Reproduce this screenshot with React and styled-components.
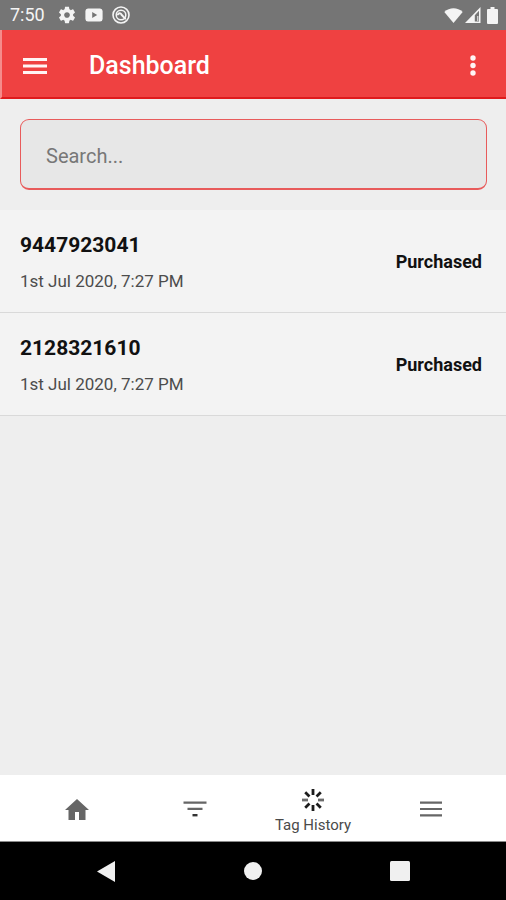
import React from "react";
import styled, { createGlobalStyle } from "styled-components";

const GlobalStyle = createGlobalStyle`
  *, *::before, *::after { box-sizing: border-box; }
  body {
    margin: 0;
    background: #eeeeee;
    font-family: Roboto, "Noto Sans", sans-serif;
    color: #111111;
  }
  button, input { font: inherit; color: inherit; }
`;

const Screen = styled.div`
  min-height: 100vh;
  display: flex;
  flex-direction: column;
`;

const StatusBar = styled.div`
  height: 30px;
  padding: 0 8px 0 10px;
  display: flex;
  align-items: center;
  justify-content: space-between;
  background: #757575;
  color: #f4f4f4;
  font-size: 18px;
  line-height: 32px;
`;

const StatusGroup = styled.div`
  display: flex;
  align-items: center;
  gap: ${(p) => p.$gap}px;
`;

const Clock = styled.time`
  margin-right: 4px;
`;

const Icon = styled.svg`
  display: block;
  flex: none;
  fill: currentColor;
`;

const BatterySlot = styled.div`
  margin-left: 4px;
`;

const AppBar = styled.header`
  height: 69px;
  padding: 4px 17px 0 19px;
  display: flex;
  align-items: center;
  background: #ef4141;
  border-left: 2px solid #f58b8b;
  border-bottom: 2px solid #df1a1c;
  color: #ffffff;
`;

const IconButton = styled.button`
  display: flex;
  align-items: center;
  justify-content: center;
  width: ${(p) => p.$width}px;
  height: 32px;
  padding: 0;
  border: 0;
  background: none;
  color: #fff4f4;
  cursor: pointer;
`;

const Title = styled.h1`
  flex: 1;
  margin: 0 0 0 40px;
  font-size: 25px;
  font-weight: 500;
  line-height: 32px;
`;

const Main = styled.main`
  flex: 1;
`;

const SearchArea = styled.form`
  padding: 20px 19px 20px 20px;
`;

const SearchInput = styled.input`
  display: block;
  width: 100%;
  height: 71px;
  padding: 3px 25px 0;
  border: 1px solid #e85b5b;
  border-bottom-width: 2px;
  border-radius: 9px;
  outline: none;
  background: #e7e7e7;
  font-size: 20px;
  &::placeholder { color: #777777; opacity: 1; }
`;

const TagList = styled.ul`
  margin: 0;
  padding: 0;
  list-style: none;
`;

const TagRow = styled.li`
  display: flex;
  align-items: center;
  justify-content: space-between;
  padding: 20px 24px 19px 20px;
  border-bottom: 1px solid #d9d9d9;
  background: #f3f3f3;
`;

const TagNumber = styled.div`
  font-size: 21px;
  font-weight: 700;
  line-height: 30px;
`;

const TagDate = styled.div`
  margin-top: 9px;
  font-size: 17px;
  line-height: 24px;
  color: #4c4c4c;
`;

const TagStatus = styled.div`
  font-size: 18px;
  font-weight: 700;
  line-height: 24px;
`;

const TabBar = styled.nav`
  height: 67px;
  padding: 0 16px 0 18px;
  display: grid;
  grid-template-columns: repeat(4, 1fr);
  background: #ffffff;
  border-bottom: 1px solid #8a8a8a;
`;

const Tab = styled.button`
  display: flex;
  flex-direction: column;
  align-items: center;
  justify-content: ${(p) => (p.$active ? "flex-end" : "center")};
  gap: 4px;
  padding: ${(p) => (p.$active ? "0 0 6px" : "2px 0 0")};
  border: 0;
  background: none;
  color: ${(p) => (p.$active ? "#1c1c1c" : "#666666")};
  font-size: 15px;
  line-height: 20px;
  cursor: pointer;
`;

const TabLabel = styled.span`
  color: #4a4a4a;
`;

const SystemBar = styled.div`
  height: 58px;
  padding: 0 33px;
  display: grid;
  grid-template-columns: repeat(3, 1fr);
  background: #000000;
`;

const SystemButton = styled.button`
  display: flex;
  align-items: center;
  justify-content: center;
  padding: 0;
  border: 0;
  background: none;
  color: #f0f0f0;
  cursor: pointer;
`;

const tags = [
  { number: "9447923041", date: "1st Jul 2020, 7:27 PM", status: "Purchased" },
  { number: "2128321610", date: "1st Jul 2020, 7:27 PM", status: "Purchased" },
];

const GearIcon = () => (
  <Icon width="18" height="18" viewBox="1 1 22 22" aria-hidden="true">
    <path d="M19.43 12.98c.04-.32.07-.64.07-.98s-.03-.66-.07-.98l2.11-1.65c.19-.15.24-.42.12-.64l-2-3.46c-.12-.22-.39-.3-.61-.22l-2.49 1c-.52-.4-1.08-.73-1.69-.98l-.38-2.65C14.46 2.18 14.25 2 14 2h-4c-.25 0-.46.18-.49.42l-.38 2.65c-.61.25-1.17.59-1.69.98l-2.49-1c-.23-.09-.49 0-.61.22l-2 3.46c-.13.22-.07.49.12.64l2.11 1.65c-.04.32-.07.65-.07.98s.03.66.07.98l-2.11 1.65c-.19.15-.24.42-.12.64l2 3.46c.12.22.39.3.61.22l2.49-1c.52.4 1.08.73 1.69.98l.38 2.65c.03.24.24.42.49.42h4c.25 0 .46-.18.49-.42l.38-2.65c.61-.25 1.17-.59 1.69-.98l2.49 1c.23.09.49 0 .61-.22l2-3.46c.12-.22.07-.49-.12-.64l-2.11-1.65zM12 15.5c-1.93 0-3.5-1.57-3.5-3.5s1.57-3.5 3.5-3.5 3.5 1.57 3.5 3.5-1.57 3.5-3.5 3.5z" />
  </Icon>
);

const VideoIcon = () => (
  <Icon width="18" height="14" viewBox="0 0 18 14" aria-hidden="true">
    <path fillRule="evenodd" d="M3 .5h12A2.6 2.6 0 0 1 17.6 3v8a2.6 2.6 0 0 1-2.6 2.5H3A2.6 2.6 0 0 1 .4 11V3A2.6 2.6 0 0 1 3 .5ZM7.2 4v6l5-3Z" />
  </Icon>
);

const BadgeIcon = () => (
  <Icon width="18" height="18" viewBox="0 0 18 18" aria-hidden="true">
    <g fill="none" stroke="currentColor" strokeLinecap="round">
      <circle cx="9" cy="9" r="8" strokeWidth="1.6" />
      <circle cx="9" cy="9" r="4.8" strokeWidth="1.5" />
      <path d="M6 8.4C7.6 6.6 9.2 7.4 9.5 8.8L13.2 12.6" strokeWidth="2" />
    </g>
  </Icon>
);

const WifiIcon = () => (
  <Icon width="19" height="17" viewBox="0 0 19 17" aria-hidden="true">
    <path d="M.3 5C5.500 0 13.500 0 18.700 5L9.500 16Z" />
  </Icon>
);

const SignalIcon = () => (
  <Icon width="16" height="16" viewBox="0 0 16 16" aria-hidden="true">
    <path fillRule="evenodd" d="M15.500 0v16H0ZM14 3.800 9.800 8.300V14.400H14Z" />
    <path d="M12.300 9h1v5h-1z" />
  </Icon>
);

const BatteryIcon = () => (
  <Icon width="11" height="17" viewBox="0 0 11 17" aria-hidden="true">
    <path d="M3.500 0h4v2H10q1 0 1 1v13q0 1-1 1H1q-1 0-1-1V3q0-1 1-1h2.500Z" />
  </Icon>
);

const spokes = [0, 45, 90, 135, 180, 225, 270, 315];

export default function App() {
  return (
    <Screen>
      <GlobalStyle />
      <StatusBar>
        <StatusGroup $gap={9}>
          <Clock>7:50</Clock>
          <GearIcon />
          <VideoIcon />
          <BadgeIcon />
        </StatusGroup>
        <StatusGroup $gap={2}>
          <WifiIcon />
          <SignalIcon />
          <BatterySlot>
            <BatteryIcon />
          </BatterySlot>
        </StatusGroup>
      </StatusBar>

      <AppBar>
        <IconButton type="button" $width={28} aria-label="Open menu">
          <Icon width="24" height="16" viewBox="0 0 24 16">
            <path d="M0 0h24v3H0zM0 6.500h24v3H0zM0 13h24v3H0z" />
          </Icon>
        </IconButton>
        <Title>Dashboard</Title>
        <IconButton type="button" $width={32} aria-label="More options">
          <Icon width="6" height="21" viewBox="0 0 6 21">
            <circle cx="3" cy="3" r="2.700" />
            <circle cx="3" cy="10.500" r="2.700" />
            <circle cx="3" cy="18" r="2.700" />
          </Icon>
        </IconButton>
      </AppBar>

      <Main>
        <SearchArea role="search" onSubmit={(e) => e.preventDefault()}>
          <SearchInput type="text" placeholder="Search..." aria-label="Search" />
        </SearchArea>
        <TagList>
          {tags.map((tag) => (
            <TagRow key={tag.number}>
              <div>
                <TagNumber>{tag.number}</TagNumber>
                <TagDate>{tag.date}</TagDate>
              </div>
              <TagStatus>{tag.status}</TagStatus>
            </TagRow>
          ))}
        </TagList>
      </Main>

      <TabBar>
        <Tab type="button" aria-label="Home">
          <Icon width="24" height="21" viewBox="0 0 24 21">
            <path d="M12 0 24 11H20.500V21H14V13H10V21H3.500V11H0Z" />
          </Icon>
        </Tab>
        <Tab type="button" aria-label="Filter">
          <Icon width="24" height="16" viewBox="0 0 24 16">
            <path d="M.500 .500h23v2.200H.500zM4.500 6.700h15v2.200H4.500z" />
            <path d="M9.500 13h5v2.400h-5z" fill="#333333" />
          </Icon>
        </Tab>
        <Tab type="button" $active>
          <Icon width="22" height="22" viewBox="0 0 22 22" aria-hidden="true">
            {spokes.map((angle) => (
              <path
                key={angle}
                d="M9.600 0h2.800v6H9.600z"
                transform={`rotate(${angle} 11 11)`}
                fillOpacity={angle % 180 === 90 ? 0.65 : 1}
              />
            ))}
          </Icon>
          <TabLabel>Tag History</TabLabel>
        </Tab>
        <Tab type="button" aria-label="Menu">
          <Icon width="22" height="16" viewBox="0 0 22 16">
            <path d="M0 .500h22v2.200H0zM0 6.900h22v2.200H0zM0 13.200h22v2.200H0z" />
          </Icon>
        </Tab>
      </TabBar>

      <SystemBar>
        <SystemButton type="button" aria-label="Back">
          <Icon width="18" height="21" viewBox="0 0 18 21">
            <path d="M18 0v21L0 10.500Z" />
          </Icon>
        </SystemButton>
        <SystemButton type="button" aria-label="Home screen">
          <Icon width="18" height="18" viewBox="0 0 18 18">
            <circle cx="9" cy="9" r="9" />
          </Icon>
        </SystemButton>
        <SystemButton type="button" aria-label="Recent apps">
          <Icon width="20" height="20" viewBox="0 0 20 20">
            <rect width="20" height="20" rx="1.500" />
          </Icon>
        </SystemButton>
      </SystemBar>
    </Screen>
  );
}
